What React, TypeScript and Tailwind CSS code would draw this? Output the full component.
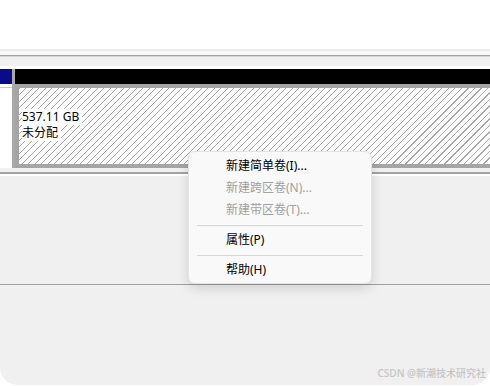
export default function App() {
  return (
    <div className="relative h-[386px] w-[490px] overflow-hidden bg-white font-['Noto_Sans','Noto_Sans_CJK_SC',sans-serif] text-[12px] text-black">
      <div className="h-[49px] bg-white" />

      {/* toolbar strip */}
      <div className="h-[2px] bg-[#ececec]" />
      <div className="h-[4px] bg-[#f7f7f7]" />
      <div className="h-px bg-[#a0a0a0]" />
      <div className="h-px bg-[#d4d4d4]" />
      <div className="h-[9px] bg-[#f0f0f0]" />
      <div className="h-[3px] bg-white" />

      {/* disk row */}
      <div className="flex h-[99px]">
        <div className="flex w-[12px] flex-col">
          <div className="h-[15px] bg-[#0a0a8c]" />
          <div className="h-[3px] bg-white" />
          <div className="h-px bg-[#c8c8c8]" />
          <div className="flex-1 bg-white" />
        </div>
        <div className="w-[3px] bg-[#a8a8a8]" />
        <div className="flex flex-1 flex-col">
          <div className="h-[15px] bg-black" />
          <div className="flex-1 border-x-[4px] border-y-[4px] border-r-0 border-[#a5a5a5] bg-[repeating-linear-gradient(135deg,#a6a6a6_0_0.8px,#ffffff_0.8px_4.6px)] pl-[3px] pt-[21px]">
            <div className="flex flex-col items-start leading-[16px]">
              <span className="bg-white pr-[3px]">537.11 GB</span>
              <span className="bg-white pr-[3px]">未分配</span>
            </div>
          </div>
        </div>
      </div>

      <div className="h-[4px] bg-[#f0f0f0]" />
      <div className="h-[2px] bg-[#a3a3a3]" />
      <div className="h-[2px] bg-white" />

      {/* lower panel */}
      <div className="h-[109px] border-b border-[#a0a0a0] bg-[#f0f0f0]" />
      <div className="relative h-[100px] rounded-b-[18px] bg-[#f0f0f0]">
        <span className="absolute bottom-[4px] right-[4px] text-[10px] font-medium text-[#c4c4c4]">
          CSDN @新潮技术研究社
        </span>
      </div>

      {/* context menu */}
      <div className="absolute left-[188px] top-[151px] w-[184px] rounded-[7px] border border-[#e3e3e3] bg-[#f9f9f9] pb-[2px] pt-[3px] shadow-[0_4px_12px_rgba(0,0,0,0.14)]">
        <div className="flex h-[22px] items-center pl-[37px]">新建简单卷(I)...</div>
        <div className="flex h-[22px] items-center pl-[37px] text-[#a0a0a0]">新建跨区卷(N)...</div>
        <div className="flex h-[22px] items-center pl-[37px] text-[#a0a0a0]">新建带区卷(T)...</div>
        <div className="flex h-[8px] items-center px-[8px]">
          <div className="h-px w-full bg-[#d6d6d6]" />
        </div>
        <div className="flex h-[22px] items-center pl-[37px]">属性(P)</div>
        <div className="flex h-[8px] items-center px-[8px]">
          <div className="h-px w-full bg-[#d6d6d6]" />
        </div>
        <div className="flex h-[22px] items-center pl-[37px]">帮助(H)</div>
      </div>
    </div>
  );
}
